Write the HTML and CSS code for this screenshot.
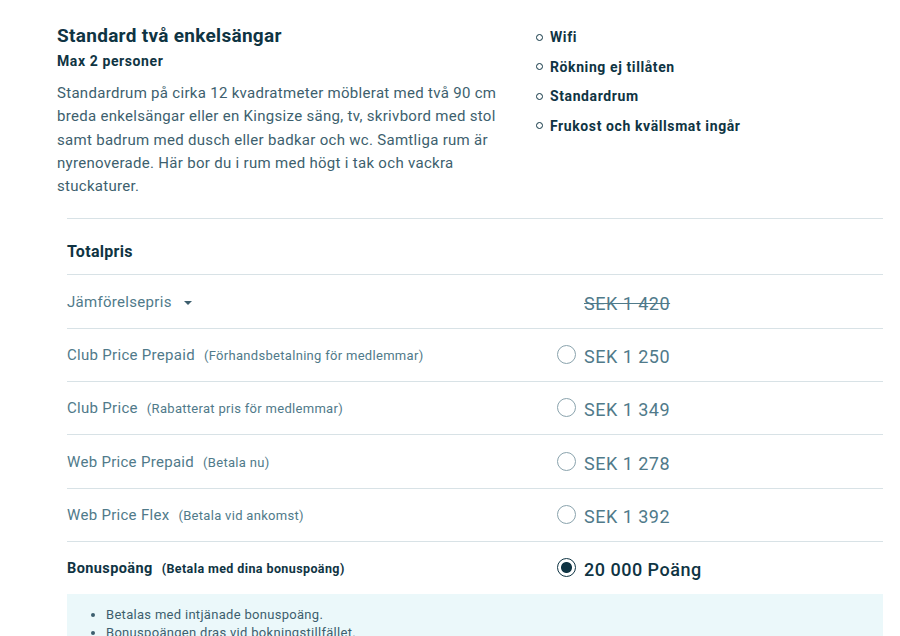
FILE: index.html
```html
<!DOCTYPE html>
<html lang="sv">
<head>
    <meta charset="UTF-8">
    <meta name="viewport" content="width=device-width, initial-scale=1.0">
    <title>Standard två enkelsängar</title>
    <link rel="stylesheet" href="styles.css">
</head>
<body>
    <div class="room">
        <div class="room-info">
            <h1>Standard två enkelsängar</h1>
            <h2>Max 2 personer</h2>
            <p>Standardrum på cirka 12 kvadratmeter möblerat med två 90 cm breda enkelsängar eller en Kingsize säng, tv, skrivbord med stol samt badrum med dusch eller badkar och wc. Samtliga rum är nyrenoverade. Här bor du i rum med högt i tak och vackra stuckaturer.</p>
        </div>
        <ul class="facilities">
            <li>Wifi</li>
            <li>Rökning ej tillåten</li>
            <li>Standardrum</li>
            <li>Frukost och kvällsmat ingår</li>
        </ul>
    </div>

    <div class="prices">
        <div class="price-head">Totalpris</div>

        <div class="price-row">
            <div class="label">Jämförelsepris <span class="caret"></span></div>
            <div class="amount"><span class="strike">SEK 1 420</span></div>
        </div>

        <label class="price-row">
            <div class="label">Club Price Prepaid <small>(Förhandsbetalning för medlemmar)</small></div>
            <div class="amount"><input type="radio" name="rate"> SEK 1 250</div>
        </label>

        <label class="price-row">
            <div class="label">Club Price <small>(Rabatterat pris för medlemmar)</small></div>
            <div class="amount"><input type="radio" name="rate"> SEK 1 349</div>
        </label>

        <label class="price-row">
            <div class="label">Web Price Prepaid <small>(Betala nu)</small></div>
            <div class="amount"><input type="radio" name="rate"> SEK 1 278</div>
        </label>

        <label class="price-row">
            <div class="label">Web Price Flex <small>(Betala vid ankomst)</small></div>
            <div class="amount"><input type="radio" name="rate"> SEK 1 392</div>
        </label>

        <label class="price-row bonus">
            <div class="label">Bonuspoäng <small>(Betala med dina bonuspoäng)</small></div>
            <div class="amount"><input type="radio" name="rate" checked> 20 000 Poäng</div>
        </label>

        <div class="bonus-info">
            <ul>
                <li>Betalas med intjänade bonuspoäng.</li>
                <li>Bonuspoängen dras vid bokningstillfället.</li>
            </ul>
        </div>
    </div>
</body>
</html>
```

FILE: styles.css
```css
body {
    font-family: Roboto, "Liberation Sans", sans-serif;
    margin: 0;
    padding: 0 17px 0 57px;
    background-color: #fff;
    color: #0f3443;
    letter-spacing: 0.3px;
}

.room {
    display: flex;
    padding-top: 24px;
    padding-bottom: 20px;
}

.room-info {
    width: 445px;
}

.room-info h1 {
    font-size: 19px;
    font-weight: 700;
    letter-spacing: 0.3px;
    margin: 0 0 6px;
}

.room-info h2 {
    font-size: 14px;
    font-weight: 700;
    letter-spacing: 0.6px;
    margin: 0 0 13px;
}

.room-info p {
    font-size: 15px;
    line-height: 23.3px;
    color: #3d5f6e;
    margin: 0;
}

.facilities {
    list-style: none;
    margin: 0 0 0 34px;
    padding: 3px 0 0;
}

.facilities li {
    font-size: 14px;
    font-weight: 700;
    line-height: 20px;
    letter-spacing: 0.6px;
    margin-bottom: 9.5px;
    display: flex;
    align-items: center;
}

.facilities li::before {
    content: "";
    width: 5px;
    height: 5px;
    border: 1px solid #0f3443;
    border-radius: 50%;
    margin-right: 7px;
}

.prices {
    margin-left: 10px;
    width: 816px;
}

.price-head {
    border-top: 1px solid #d8e2e6;
    font-size: 16px;
    font-weight: 700;
    padding: 23px 0 0;
    height: 32px;
}

.price-row {
    display: grid;
    grid-template-columns: 490px 1fr;
    align-items: center;
    height: 52.3px;
    border-top: 1px solid #d8e2e6;
    color: #507a8a;
    cursor: pointer;
}

.label {
    font-size: 15px;
}

.label small {
    font-size: 13px;
    margin-left: 5px;
}

.caret {
    display: inline-block;
    width: 0;
    height: 0;
    border-left: 4px solid transparent;
    border-right: 4px solid transparent;
    border-top: 4px solid #3d5f6e;
    vertical-align: middle;
    margin-left: 8px;
}

.amount {
    font-size: 18px;
    letter-spacing: 0.5px;
    display: flex;
    align-items: center;
    padding-top: 3px;
}

.strike {
    margin-left: 27px;
    text-decoration: line-through;
}

.amount input {
    appearance: none;
    width: 19px;
    height: 19px;
    border: 1px solid #8aa3ad;
    border-radius: 50%;
    margin: 0 8px 4px 0;
    background: #fff;
}

.amount input:checked {
    border-color: #0f3443;
    background: radial-gradient(circle, #0f3443 0 5px, #fff 6px);
}

.bonus {
    color: #0f3443;
}

.bonus .label {
    font-weight: 700;
    font-size: 14.5px;
    letter-spacing: 0.4px;
}

.bonus .label small {
    font-size: 12.5px;
}

.bonus .amount {
    font-weight: 500;
}

.bonus-info {
    background: #ebf8fa;
    padding: 12px 30px 10px;
    font-size: 13px;
    color: #3d5f6e;
}

.bonus-info ul {
    margin: 0;
    padding-left: 9px;
}

.bonus-info li {
    line-height: 18px;
}
```
